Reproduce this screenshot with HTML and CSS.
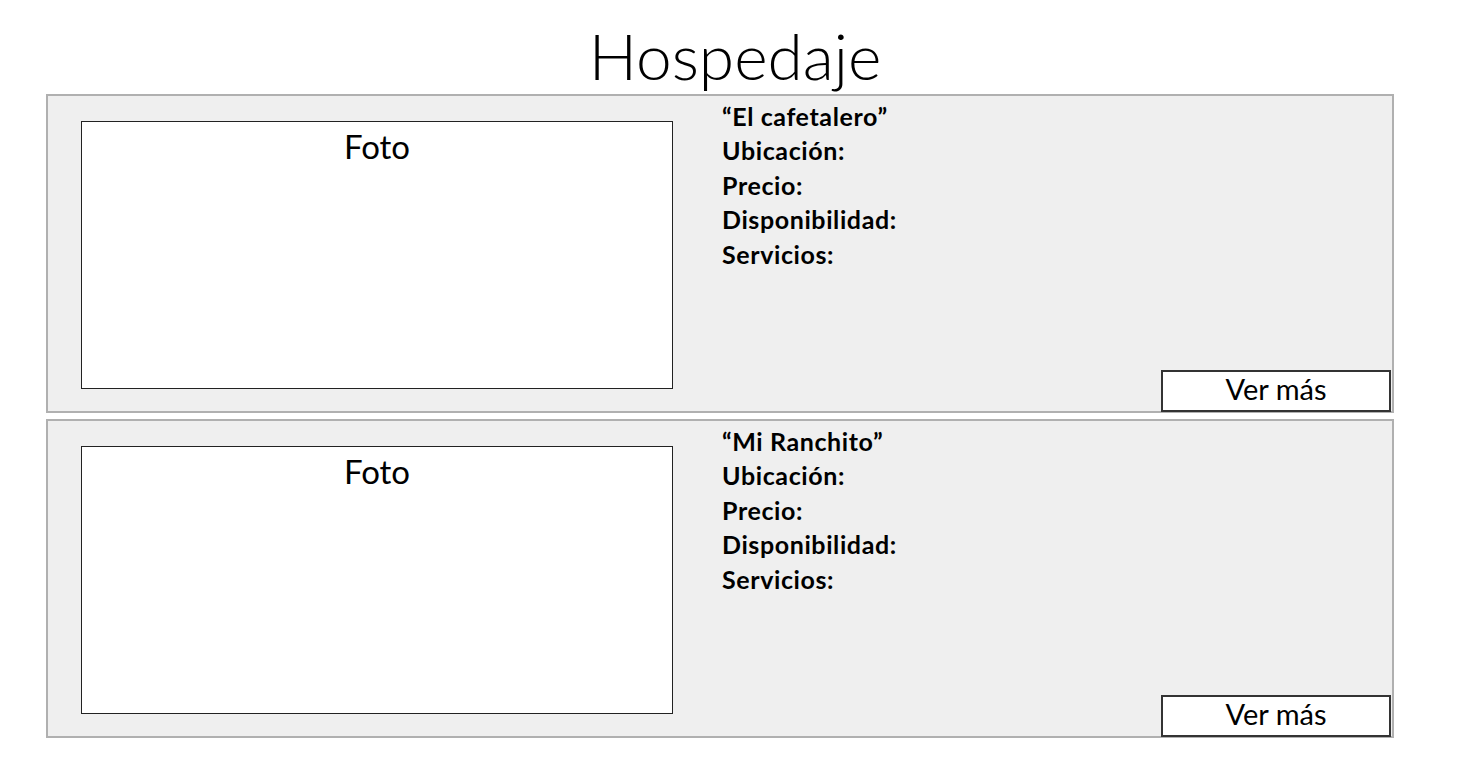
FILE: index.html
```html
<!DOCTYPE html>
<html lang="es">
<head>
  <meta charset="UTF-8">
  <title>Hospedaje</title>
  <link rel="stylesheet" href="styles.css">
</head>
<body>
  <h1 class="page-title">Hospedaje</h1>

  <div class="list">
    <!-- Hospedaje 1 -->
    <div class="card">
      <div class="photo">Foto</div>
      <div class="info">
        <p class="name">“El cafetalero”</p>
        <p>Ubicación:</p>
        <p>Precio:</p>
        <p>Disponibilidad:</p>
        <p>Servicios:</p>
        <button class="more">Ver más</button>
      </div>
    </div>

    <!-- Hospedaje 2 -->
    <div class="card">
      <div class="photo">Foto</div>
      <div class="info">
        <p class="name">“Mi Ranchito”</p>
        <p>Ubicación:</p>
        <p>Precio:</p>
        <p>Disponibilidad:</p>
        <p>Servicios:</p>
        <button class="more">Ver más</button>
      </div>
    </div>
  </div>
</body>
</html>
```

FILE: styles.css
```css
/* General */
* {
  box-sizing: border-box;
}

body {
  margin: 0;
  padding: 0 67px 0 46px;
  background-color: #fff;
  color: #000;
  font-family: 'Lato', 'Open Sans', sans-serif;
}

.page-title {
  margin: 0;
  height: 94px;
  line-height: 112px;
  font-size: 64px;
  font-weight: 300;
  text-align: center;
  padding-left: 30px;
}

.list {
  display: flex;
  flex-direction: column;
  gap: 6px;
}

/* Card */
.card {
  display: flex;
  height: 319px;
  background-color: #efefef;
  border: 2px solid #b0b0b0;
  padding: 25px 1px 0 33px;
}

.photo {
  flex-shrink: 0;
  width: 592px;
  height: 268px;
  background-color: #fff;
  border: 1.5px solid #222;
  text-align: center;
  font-size: 33px;
  line-height: 48px;
}

.info {
  flex: 1;
  display: flex;
  flex-direction: column;
  margin: -22px 0 0 49px;
}

.info p {
  margin: 0;
  font-size: 25px;
  font-weight: 700;
  letter-spacing: 0.6px;
  line-height: 34.4px;
}

.more {
  margin-top: auto;
  margin-bottom: -1px;
  align-self: flex-end;
  width: 230px;
  height: 42px;
  background-color: #fff;
  border: 2px solid #333;
  padding: 0 0 5px;
  font-family: 'Lato', 'Open Sans', sans-serif;
  font-size: 29px;
  line-height: 30px;
  color: #000;
}
```
